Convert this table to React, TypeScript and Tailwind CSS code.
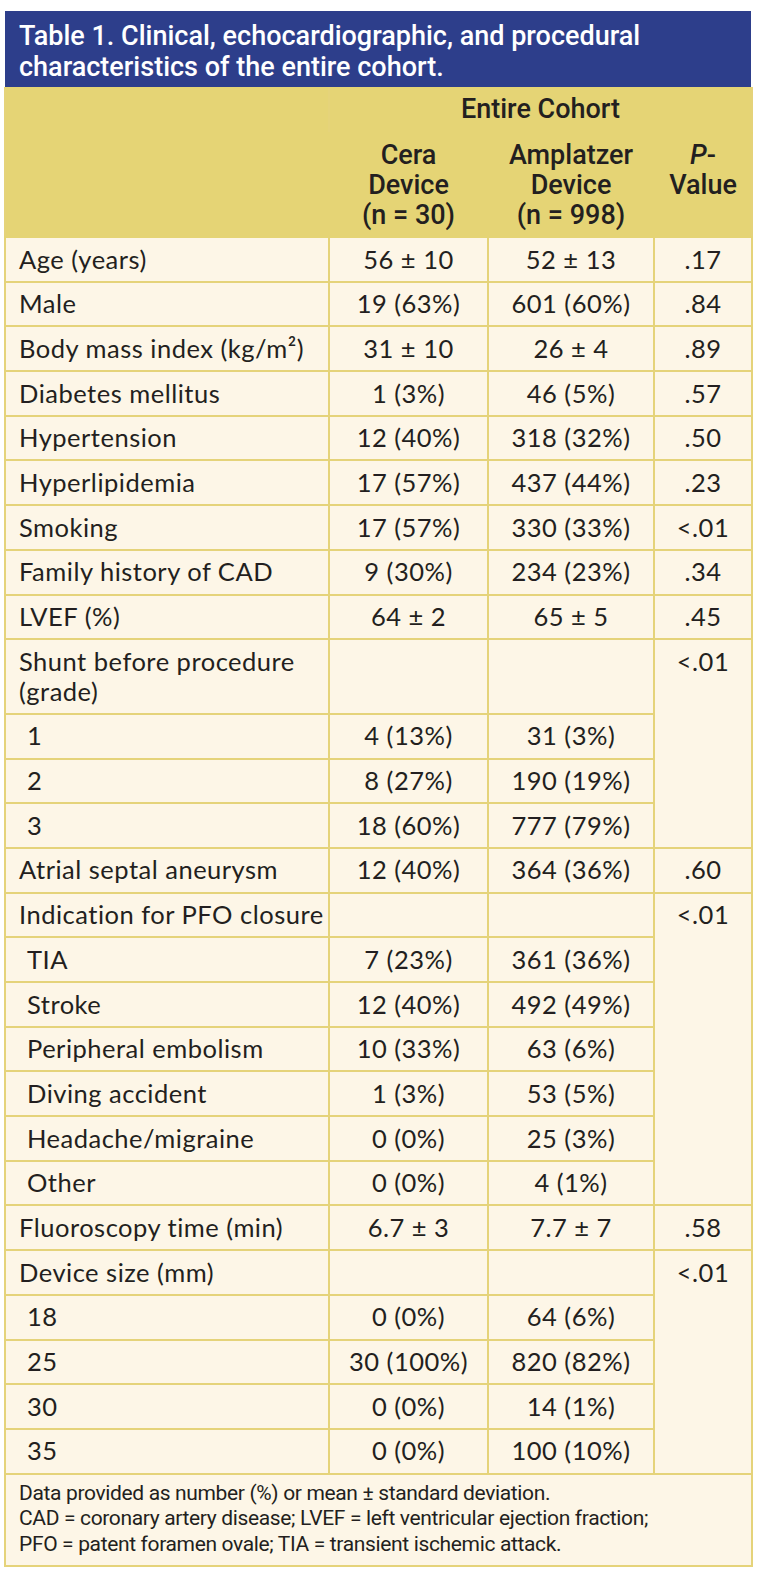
import React from "react";

type Row = {
  label: React.ReactNode;
  a: string;
  b: string;
  p?: string;
  pSpan?: number;
  sub?: boolean;
};

const rows: Row[] = [
  { label: "Age (years)", a: "56 ± 10", b: "52 ± 13", p: ".17" },
  { label: "Male", a: "19 (63%)", b: "601 (60%)", p: ".84" },
  { label: "Body mass index (kg/m²)", a: "31 ± 10", b: "26 ± 4", p: ".89" },
  { label: "Diabetes mellitus", a: "1 (3%)", b: "46 (5%)", p: ".57" },
  { label: "Hypertension", a: "12 (40%)", b: "318 (32%)", p: ".50" },
  { label: "Hyperlipidemia", a: "17 (57%)", b: "437 (44%)", p: ".23" },
  { label: "Smoking", a: "17 (57%)", b: "330 (33%)", p: "<.01" },
  { label: "Family history of CAD", a: "9 (30%)", b: "234 (23%)", p: ".34" },
  { label: "LVEF (%)", a: "64 ± 2", b: "65 ± 5", p: ".45" },
  {
    label: (
      <>
        Shunt before procedure
        <br />
        (grade)
      </>
    ),
    a: "",
    b: "",
    p: "<.01",
    pSpan: 4,
  },
  { label: "1", a: "4 (13%)", b: "31 (3%)", sub: true },
  { label: "2", a: "8 (27%)", b: "190 (19%)", sub: true },
  { label: "3", a: "18 (60%)", b: "777 (79%)", sub: true },
  { label: "Atrial septal aneurysm", a: "12 (40%)", b: "364 (36%)", p: ".60" },
  { label: "Indication for PFO closure", a: "", b: "", p: "<.01", pSpan: 7 },
  { label: "TIA", a: "7 (23%)", b: "361 (36%)", sub: true },
  { label: "Stroke", a: "12 (40%)", b: "492 (49%)", sub: true },
  { label: "Peripheral embolism", a: "10 (33%)", b: "63 (6%)", sub: true },
  { label: "Diving accident", a: "1 (3%)", b: "53 (5%)", sub: true },
  { label: "Headache/migraine", a: "0 (0%)", b: "25 (3%)", sub: true },
  { label: "Other", a: "0 (0%)", b: "4 (1%)", sub: true },
  { label: "Fluoroscopy time (min)", a: "6.7 ± 3", b: "7.7 ± 7", p: ".58" },
  { label: "Device size (mm)", a: "", b: "", p: "<.01", pSpan: 5 },
  { label: "18", a: "0 (0%)", b: "64 (6%)", sub: true },
  { label: "25", a: "30 (100%)", b: "820 (82%)", sub: true },
  { label: "30", a: "0 (0%)", b: "14 (1%)", sub: true },
  { label: "35", a: "0 (0%)", b: "100 (10%)", sub: true },
];

const cell =
  "border-2 border-[#e5d37a] align-top pt-[5.5px] pb-[7.2px] leading-[30px]";

export default function App() {
  return (
    <div className="bg-white w-[776px] min-h-[1586px] pt-[11px]">
      <div className="ml-[4px] w-[747px]">
        <div
          className="bg-[#2d3e8b] ml-[1px] h-[76px] pl-[14px] pt-[10px] text-white text-[27px] leading-[31px] font-medium"
          style={{ fontFamily: "Roboto, 'Liberation Sans', sans-serif" }}
        >
          Table 1. Clinical, echocardiographic, and procedural
          <br />
          characteristics of the entire cohort.
        </div>
        <table
          className="table-fixed border-collapse w-[747px] text-[#231f20]"
          style={{ fontFamily: "Lato, 'Open Sans', sans-serif" }}
        >
          <colgroup>
            <col className="w-[324px]" />
            <col className="w-[159px]" />
            <col className="w-[166px]" />
            <col className="w-[98px]" />
          </colgroup>
          <thead
            className="bg-[#e5d475] text-[27px] font-medium"
            style={{ fontFamily: "Roboto, 'Liberation Sans', sans-serif" }}
          >
            <tr>
              <th className="border-2 border-[#e5d475] border-l-[#e5d37a] border-r-[#e5d37a] h-[45px]"></th>
              <th
                colSpan={3}
                className="border-2 border-[#e5d475] border-r-[#e5d37a] font-medium text-center align-top pt-[5px] leading-[30px]"
              >
                Entire Cohort
              </th>
            </tr>
            <tr>
              <th className="border-2 border-[#e5d475] border-l-[#e5d37a]"></th>
              <th className="border-2 border-[#e5d475] font-medium text-center align-top pt-[6px] pb-[6px] leading-[30px]">
                Cera
                <br />
                Device
                <br />
                (n = 30)
              </th>
              <th className="border-2 border-[#e5d475] font-medium text-center align-top pt-[6px] pb-[6px] leading-[30px]">
                Amplatzer
                <br />
                Device
                <br />
                (n = 998)
              </th>
              <th className="border-2 border-[#e5d475] border-r-[#e5d37a] font-medium text-center align-top pt-[6px] pb-[6px] leading-[30px]">
                <i>P</i>-
                <br />
                Value
              </th>
            </tr>
          </thead>
          <tbody className="bg-[#fdf6e7] text-[25.5px] tracking-[0.5px]">
            {(() => {
              let skip = 0;
              return rows.map((r, i) => {
                const showP = skip === 0;
                if (skip > 0) skip -= 1;
                if (r.pSpan) skip = r.pSpan - 1;
                return (
                  <tr key={i}>
                    <td
                      className={`${cell} text-left whitespace-nowrap ${
                        r.sub ? "pl-[21px]" : "pl-[13px]"
                      } pr-[2px]`}
                    >
                      {r.label}
                    </td>
                    <td className={`${cell} text-center whitespace-nowrap`}>
                      {r.a}
                    </td>
                    <td className={`${cell} text-center whitespace-nowrap`}>
                      {r.b}
                    </td>
                    {showP && (
                      <td
                        rowSpan={r.pSpan ?? 1}
                        className={`${cell} text-center whitespace-nowrap`}
                      >
                        {r.p}
                      </td>
                    )}
                  </tr>
                );
              });
            })()}
            <tr>
              <td
                colSpan={4}
                className="border-2 border-[#e5d37a] pl-[13px] pt-[6px] pb-[8px] text-[21px] leading-[25.5px] tracking-[-0.35px]"
                style={{ fontFamily: "Roboto, 'Liberation Sans', sans-serif" }}
              >
                Data provided as number (%) or mean ± standard deviation.
                <br />
                CAD = coronary artery disease; LVEF = left ventricular ejection
                fraction;
                <br />
                PFO = patent foramen ovale; TIA = transient ischemic attack.
              </td>
            </tr>
          </tbody>
        </table>
      </div>
    </div>
  );
}
